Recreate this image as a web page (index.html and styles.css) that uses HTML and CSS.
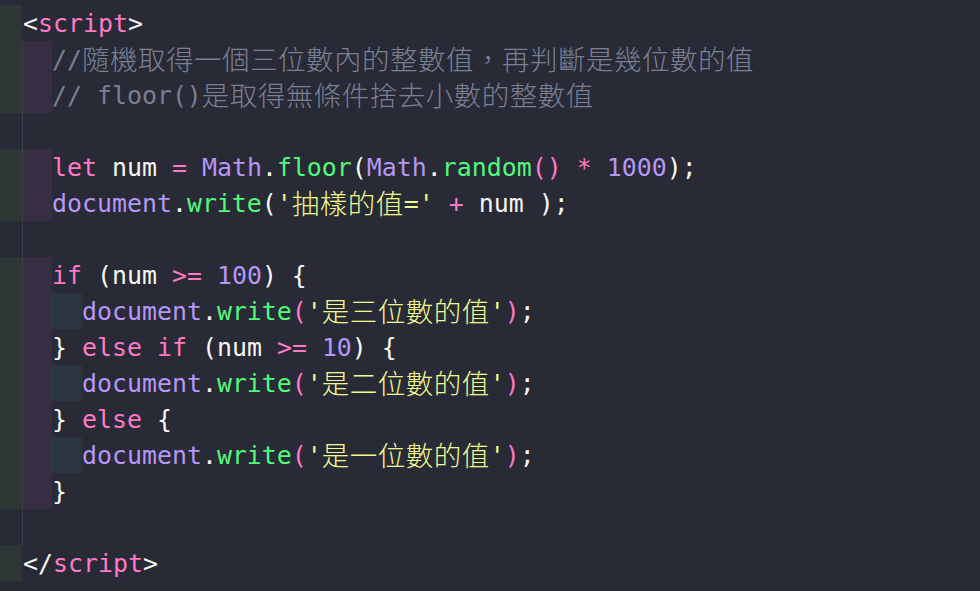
FILE: index.html
```html
<!DOCTYPE html>
<html lang="zh-Hant">
<head>
<meta charset="utf-8">
<title>script</title>
<link rel="stylesheet" href="styles.css">
</head>
<body>
<div class="editor">
  <div class="ln"><span class="i1"></span><span class="gp"></span><span class="code"><span class="w">&lt;</span><span class="k">script</span><span class="w">&gt;</span></span></div>
  <div class="blk">
    <div class="ln"><span class="i1"></span><span class="gp"></span><span class="i2"></span><span class="code c">//<span class="cj">隨機取得一個三位數內的整數值，再判斷是幾位數的值</span></span></div>
    <div class="ln"><span class="i1"></span><span class="gp"></span><span class="i2"></span><span class="code c">// floor()<span class="cj">是取得無條件捨去小數的整數值</span></span></div>
    <div class="ln"></div>
    <div class="ln"><span class="i1"></span><span class="gp"></span><span class="i2"></span><span class="code"><span class="k">let</span> <span class="w">num</span> <span class="k">=</span> <span class="p">Math</span><span class="w">.</span><span class="f">floor</span><span class="w">(</span><span class="p">Math</span><span class="w">.</span><span class="f">random</span><span class="k">()</span> <span class="k">*</span> <span class="p">1000</span><span class="w">);</span></span></div>
    <div class="ln"><span class="i1"></span><span class="gp"></span><span class="i2"></span><span class="code"><span class="p">document</span><span class="w">.</span><span class="f">write</span><span class="w">(</span><span class="s">'<span class="cj">抽樣的值</span>='</span> <span class="k">+</span> <span class="w">num );</span></span></div>
    <div class="ln"></div>
    <div class="ln"><span class="i1"></span><span class="gp"></span><span class="i2"></span><span class="code"><span class="k">if</span> <span class="w">(num</span> <span class="k">&gt;=</span> <span class="p">100</span><span class="w">) {</span></span></div>
    <div class="ln"><span class="i1"></span><span class="gp"></span><span class="i2"></span><span class="i3"></span><span class="code"><span class="p">document</span><span class="w">.</span><span class="f">write</span><span class="k">(</span><span class="s">'<span class="cj">是三位數的值</span>'</span><span class="k">)</span><span class="w">;</span></span></div>
    <div class="ln"><span class="i1"></span><span class="gp"></span><span class="i2"></span><span class="code"><span class="w">}</span> <span class="k">else</span> <span class="k">if</span> <span class="w">(num</span> <span class="k">&gt;=</span> <span class="p">10</span><span class="w">) {</span></span></div>
    <div class="ln"><span class="i1"></span><span class="gp"></span><span class="i2"></span><span class="i3"></span><span class="code"><span class="p">document</span><span class="w">.</span><span class="f">write</span><span class="k">(</span><span class="s">'<span class="cj">是二位數的值</span>'</span><span class="k">)</span><span class="w">;</span></span></div>
    <div class="ln"><span class="i1"></span><span class="gp"></span><span class="i2"></span><span class="code"><span class="w">}</span> <span class="k">else</span> <span class="w">{</span></span></div>
    <div class="ln"><span class="i1"></span><span class="gp"></span><span class="i2"></span><span class="i3"></span><span class="code"><span class="p">document</span><span class="w">.</span><span class="f">write</span><span class="k">(</span><span class="s">'<span class="cj">是一位數的值</span>'</span><span class="k">)</span><span class="w">;</span></span></div>
    <div class="ln"><span class="i1"></span><span class="gp"></span><span class="i2"></span><span class="code"><span class="w">}</span></span></div>
    <div class="ln"></div>
  </div>
  <div class="ln"><span class="i1"></span><span class="gp"></span><span class="code"><span class="w">&lt;/</span><span class="k">script</span><span class="w">&gt;</span></span></div>
</div>
</body>
</html>
```
FILE: styles.css
```css
html, body {
  margin: 0;
  padding: 0;
  background: #282a36;
}

.editor {
  padding-top: 5px;
  font-family: "DejaVu Sans Mono", "Noto Sans CJK TC", monospace;
  font-size: 24.9px;
  color: #f8f8f2;
}

.blk {
  background: linear-gradient(#3e4050, #3e4050) 22px 0 / 1px 100% no-repeat;
}

.ln {
  display: flex;
  height: 36px;
  line-height: 36px;
  white-space: pre;
}

.i1 {
  flex: none;
  width: 22px;
  background: #2d3836;
}

.gp {
  flex: none;
  width: 1px;
}

.i2 {
  flex: none;
  width: 29px;
  background: #372e44;
}

.i3 {
  flex: none;
  width: 30px;
  box-sizing: border-box;
  border-left: 1px solid #35404c;
  background: #2a3540;
}

.code {
  flex: none;
  padding-top: 1px;
  height: 35px;
}

.cj {
  display: inline-block;
  height: 28px;
  line-height: 28px;
  font-family: "Noto Sans CJK TC", "Noto Sans CJK SC", sans-serif;
  font-size: 27.5px;
  font-weight: 300;
  letter-spacing: 0.5px;
  vertical-align: -2px;
}

.w { color: #f8f8f2; }
.k { color: #ff79c6; }
.p { color: #b597f7; }
.f { color: #50fa7b; }
.s { color: #f1fa8c; }
.c { color: #7a8094; }
```
